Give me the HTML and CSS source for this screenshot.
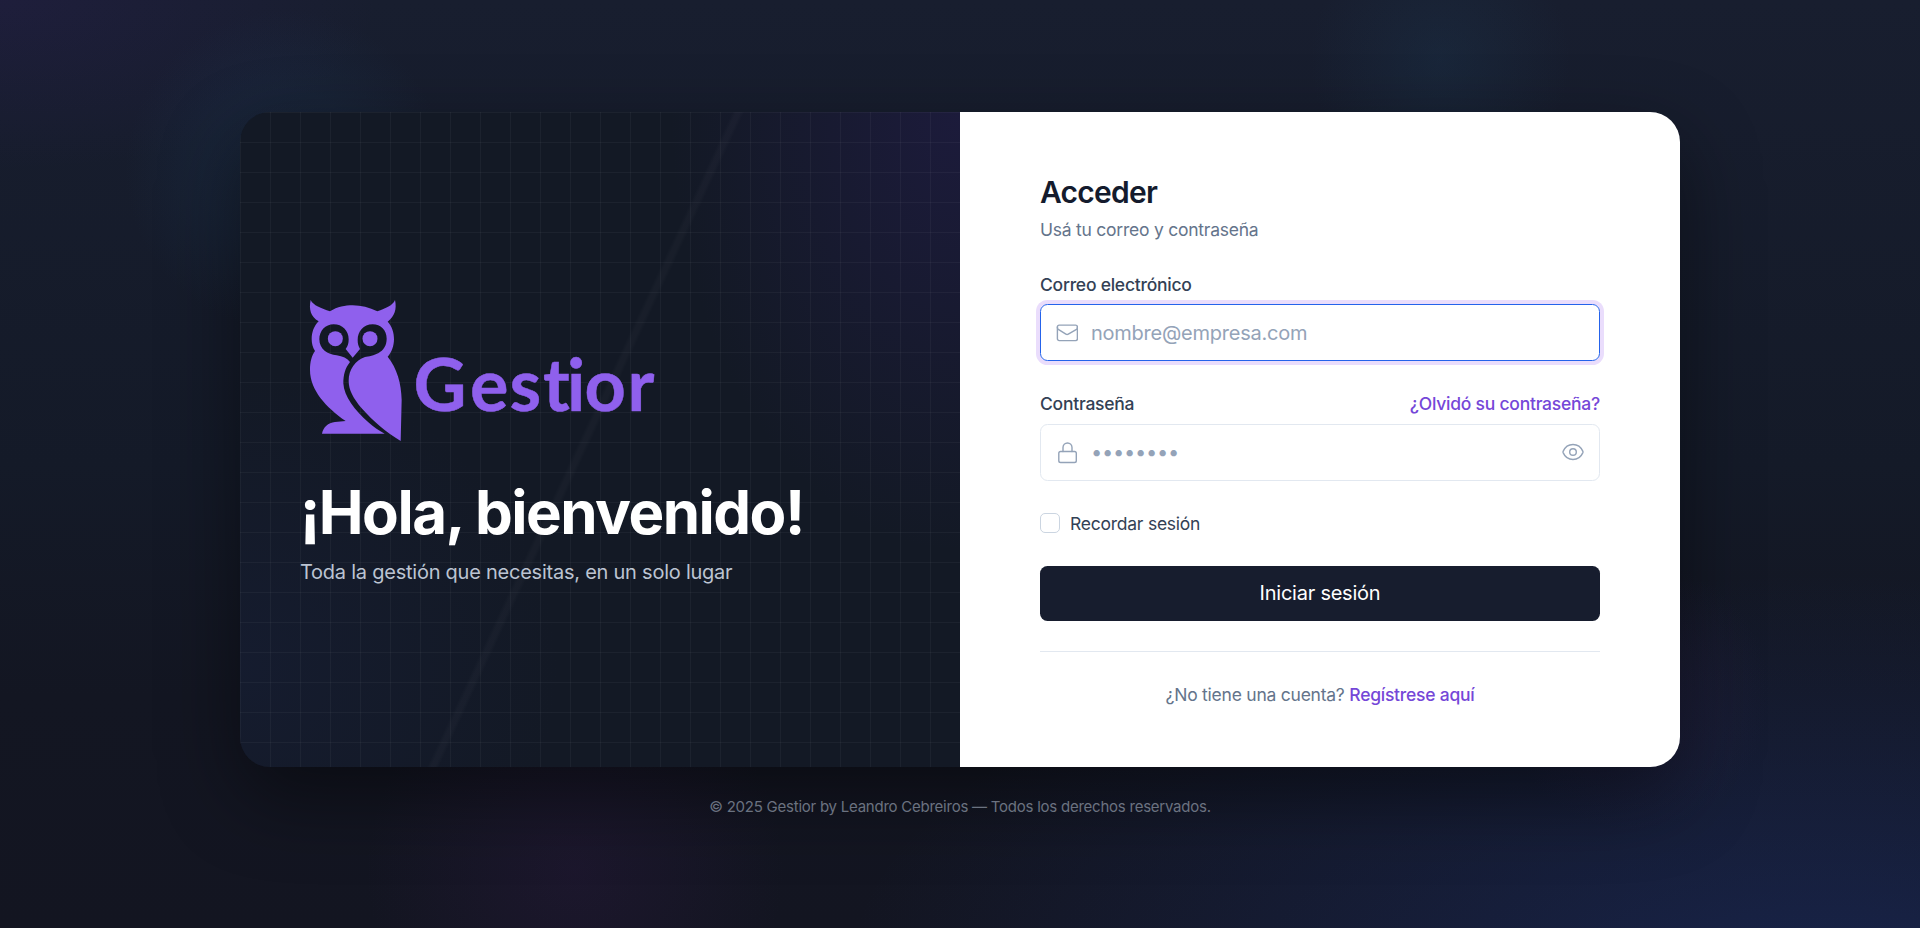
FILE: index.html
```html
<!DOCTYPE html>
<html lang="es">
<head>
<meta charset="utf-8">
<title>Gestior — Acceder</title>
<link rel="stylesheet" href="styles.css">
</head>
<body>
<main class="page">
  <div class="glow glow-teal-left"></div>
  <div class="glow glow-teal-right"></div>
  <div class="glow glow-plum-bottom"></div>
  <div class="glow glow-plum-right"></div>
  <section class="card">
    <div class="intro">
      <svg class="logo" viewBox="300 292 370 156" role="img" aria-label="Gestior">
        <g transform="translate(290 290) scale(.33333)">
          <path d="M62 30C69 46 94 55 120 64C143 50 165 46 188 46C213 46 238 52 262 64C287 55 309 46 315 30C321 57 314 79 293 95C306 109 312 128 312 147C312 168 305 187 293 200C321 235 334 280 335 330L332 453C288 426 250 395 215 355C190 325 176 300 176 273C176 238 196 211 225 201C248 197 290 190 290 146C290 120 272 103 248 103C220 103 203 125 203 150C203 160 205 168 210 177L188 203L167 177C174 168 176 160 176 148C176 122 157 103 131 103C106 103 88 123 88 148C88 178 113 193 140 196C158 199 172 205 180 216C165 235 160 255 160 280C162 320 195 362 235 397C252 412 267 422 284 431L96 431C100 412 114 398 135 396L167 393C108 352 60 300 60 240C60 215 65 197 75 183C68 172 65 160 65 147C65 127 72 108 86 94C62 80 56 58 62 30Z"/>
          <circle cx="136" cy="146" r="22.5"/>
          <circle cx="240" cy="146" r="22.5"/>
        </g>
        <text class="logo-text" y="410.5"><tspan x="413.500" textLength="53" lengthAdjust="spacingAndGlyphs">G</tspan><tspan x="470 509.500 543 567 584.500 627.500">estior</tspan></text>
      </svg>
      <h1 class="welcome">¡Hola, bienvenido!</h1>
      <p class="tagline">Toda la gestión que necesitas, en un solo lugar</p>
    </div>
    <form class="login">
      <h2 class="login-title">Acceder</h2>
      <p class="login-sub">Usá tu correo y contraseña</p>
      <div class="fields">
        <div class="field">
          <label class="label" for="email">Correo electrónico</label>
          <div class="control control-focus">
            <svg class="icon" viewBox="0 0 22 22"><rect x="1.400" y="3.100" width="20" height="15.500" rx="1.800"/><path d="M1.400 5v.8c0 .7.3 1.200.9 1.600l7.600 4.800a2.300 2.300 0 0 0 2.400 0l8.200-4.800c.6-.4.9-.9.9-1.600V5"/></svg>
            <input class="input input-email" id="email" type="email" placeholder="nombre@empresa.com">
          </div>
        </div>
        <div class="field">
          <div class="label-row">
            <label class="label" for="password">Contraseña</label>
            <a class="link">¿Olvidó su contraseña?</a>
          </div>
          <div class="control">
            <svg class="icon" viewBox="0 0 22 22"><rect x="2.800" y="9.500" width="17.500" height="11" rx="1.800"/><path d="M7 9.500V5.500a4.500 4.500 0 0 1 9 0v4"/></svg>
            <input class="input" id="password" type="password" placeholder="••••••••">
            <svg class="icon icon-eye" viewBox="0 0 22 22"><path d="M1.100 11.600a1.700 1.700 0 0 1 0-1.200C2.900 6.300 6.600 3.500 11 3.500s8.100 2.800 9.900 6.900a1.700 1.700 0 0 1 0 1.200C19.100 15.700 15.400 18.500 11 18.500S2.900 15.700 1.100 11.600Z"/><circle cx="11" cy="11" r="3.300"/></svg>
          </div>
        </div>
      </div>
      <label class="remember"><input class="check" type="checkbox">Recordar sesión</label>
      <button class="submit" type="button">Iniciar sesión</button>
      <p class="register">¿No tiene una cuenta? <a class="link">Regístrese aquí</a></p>
    </form>
  </section>
  <footer class="footer">© 2025 Gestior by Leandro Cebreiros — Todos los derechos reservados.</footer>
</main>
</body>
</html>
```
FILE: styles.css
```css
* { box-sizing: border-box; }

body {
  margin: 0;
  font-family: Inter, sans-serif;
  font-size: 20px;
  line-height: 30px;
  letter-spacing: -.24px;
}

h1, h2, p { margin: 0; }

.page {
  position: relative;
  height: 928px;
  padding-top: 112px;
  overflow: hidden;
  display: flex;
  flex-direction: column;
  align-items: center;
  background:
    radial-gradient(ellipse 380px 170px at 0 0, rgba(76, 29, 149, .12), transparent),
    radial-gradient(ellipse 980px 400px at 95% 105%, rgba(37, 74, 180, .27), transparent),
    linear-gradient(180deg, #181e2f 0%, #141a28 50%, #131622 75%, #131521 100%);
}

/* Soft colour spots behind the card */
.glow { position: absolute; border-radius: 50%; }
.glow-teal-left { left: 125px; top: 10px; width: 320px; height: 320px; background: radial-gradient(closest-side, rgba(30, 62, 95, .24), rgba(30, 62, 95, .18) 50%, transparent); }
.glow-teal-right { left: 1310px; top: -70px; width: 260px; height: 260px; background: radial-gradient(closest-side, rgba(30, 64, 92, .25), transparent); }
.glow-plum-bottom { left: 365px; top: 660px; width: 420px; height: 420px; background: radial-gradient(closest-side, rgba(80, 32, 110, .15), transparent); }
.glow-plum-right { left: 1500px; top: 560px; width: 270px; height: 270px; background: radial-gradient(closest-side, rgba(60, 40, 90, .25), transparent); }

.card {
  position: relative;
  display: grid;
  grid-template-columns: 720px 720px;
  height: 655px;
  border-radius: 30px;
  overflow: hidden;
  box-shadow: 0 30px 80px rgba(0, 0, 0, .45);
}

.intro {
  display: flex;
  flex-direction: column;
  justify-content: center;
  padding: 0 60px;
  background:
    linear-gradient(115deg, transparent 48%, rgba(255, 255, 255, .025) 48.4%, rgba(255, 255, 255, .025) 48.800%, transparent 49.200%),
    linear-gradient(rgba(255, 255, 255, .04) 1px, transparent 1px) 0 0 / 30px 30px,
    linear-gradient(90deg, rgba(255, 255, 255, .04) 1px, transparent 1px) 0 0 / 30px 30px,
    radial-gradient(ellipse 290px 440px at 100% 0, rgba(52, 32, 118, .27), transparent),
    radial-gradient(ellipse 320px 300px at 0 85%, rgba(30, 40, 90, .18), transparent),
    #131925;
}

.logo { width: 370px; height: 156px; fill: #8f60ed; }
.logo-text { font-family: Lato, sans-serif; font-weight: 700; font-size: 72px; letter-spacing: 0; font-variant-ligatures: none; stroke: #8f60ed; stroke-width: .5; }

.welcome {
  margin-top: 34px;
  font-size: 60px;
  line-height: 60px;
  font-weight: 700;
  letter-spacing: -1.5px;
  color: #fff;
}

.tagline { margin-top: 15px; color: #bcc4d2; }

.login {
  padding: 60px 80px;
  background: #fff;
}

.login-title { font-size: 30px; line-height: 40px; font-weight: 600; letter-spacing: -.75px; color: #141b2d; }
.login-sub { margin-top: 5px; font-size: 17.5px; line-height: 25px; color: #64748b; }

.fields { display: grid; gap: 30px; margin-top: 30px; }
.field { display: grid; gap: 7px; }
.label-row { display: flex; justify-content: space-between; margin-bottom: 1px; }
.label { font-size: 17.5px; line-height: 25px; font-weight: 500; color: #334155; }
.link { font-size: 17.5px; line-height: 25px; font-weight: 500; color: #7547d8; }

.control {
  display: flex;
  align-items: center;
  height: 57px;
  padding: 0 15px;
  border: 1px solid #e2e8f0;
  border-radius: 7.5px;
}
.control-focus { border-color: #2563eb; box-shadow: 0 0 0 4px #eaddfc; }

.icon { flex: none; width: 22px; height: 22px; fill: none; stroke: #94a3b8; stroke-width: 1.400; stroke-linecap: round; stroke-linejoin: round; }
.icon-eye { margin-bottom: 1px; }

.input {
  flex: 1;
  min-width: 0;
  padding: 0 0 1px 13px;
  border: 0;
  outline: 0;
  background: transparent;
  font: inherit;
  letter-spacing: inherit;
}
.input-email { padding-bottom: 0; }
.input::placeholder { color: #94a3b8; opacity: 1; }

.remember {
  display: flex;
  align-items: center;
  gap: 10px;
  margin-top: 30px;
  font-size: 17.5px;
  line-height: 25px;
  color: #334155;
}
.check { appearance: none; width: 20px; height: 20px; margin: 0 0 1px; border: 1px solid #cbd5e1; border-radius: 5px; background: #fff; }

.submit {
  display: block;
  width: 100%;
  height: 55px;
  margin-top: 30px;
  padding: 0 0 2px;
  border: 0;
  border-radius: 7.5px;
  background: #171d2e;
  color: #fff;
  font: inherit;
  letter-spacing: inherit;
}

.register {
  margin-top: 30px;
  padding-top: 30px;
  border-top: 1px solid #e2e8f0;
  font-size: 17.5px;
  line-height: 25px;
  text-align: center;
  color: #64748b;
}

.footer { position: relative; margin-top: 30px; font-size: 15px; line-height: 20px; color: #6b7280; }
```
